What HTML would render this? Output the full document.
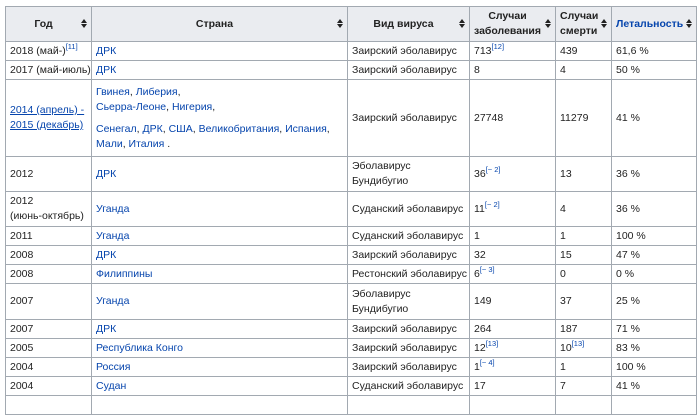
<!DOCTYPE html>
<html><head><meta charset="utf-8"><style>
body{margin:0;background:#fff;font-family:"Liberation Sans",Arial,sans-serif;font-size:10.5px;color:#222;}
table{position:absolute;left:5px;top:6px;border-collapse:collapse;table-layout:fixed;width:691px;}
td,th{border:1px solid #a2a9b1;padding:0 4px;vertical-align:middle;line-height:15px;white-space:nowrap;overflow:hidden;}
th{background:#eaecf0;font-weight:bold;text-align:center;position:relative;padding-right:14px;}
th:after{content:"";position:absolute;right:4px;top:12px;width:0;height:0;border-left:3px solid transparent;border-right:3px solid transparent;border-bottom:4px solid #222;}
th:before{content:"";position:absolute;right:4px;top:17px;width:0;height:0;border-left:3px solid transparent;border-right:3px solid transparent;border-top:4px solid #222;}
a{color:#0645ad;text-decoration:none}
sup{font-size:7.5px;line-height:0;color:#0645ad;vertical-align:5px}
.u{text-decoration:underline}
</style></head><body>
<table>
<colgroup><col style="width:86px"><col style="width:256px"><col style="width:122px"><col style="width:86px"><col style="width:56px"><col style="width:85px"></colgroup>
<tr style="height:35px"><th>Год</th><th>Страна</th><th>Вид вируса</th><th>Случаи<br>заболевания</th><th>Случаи<br>смерти</th><th><a>Летальность</a></th></tr>
<tr style="height:19px"><td>2018 (май-)<sup>[11]</sup></td><td><a>ДРК</a></td><td>Заирский эболавирус</td><td>713<sup>[12]</sup></td><td>439</td><td>61,6 %</td></tr>
<tr style="height:19px"><td>2017 (май-июль)</td><td><a>ДРК</a></td><td>Заирский эболавирус</td><td>8</td><td>4</td><td>50 %</td></tr>
<tr style="height:77px"><td><a class="u">2014 (апрель) -<br>2015 (декабрь)</a></td><td><a>Гвинея</a>, <a>Либерия</a>,<br><a>Сьерра-Леоне</a>, <a>Нигерия</a>,<div style="height:7px"></div><a>Сенегал</a>, <a>ДРК</a>, <a>США</a>, <a>Великобритания</a>, <a>Испания</a>,<br><a>Мали</a>, <a>Италия</a> .</td><td>Заирский эболавирус</td><td>27748</td><td>11279</td><td>41 %</td></tr>
<tr style="height:35px"><td>2012</td><td><a>ДРК</a></td><td>Эболавирус<br>Бундибугио</td><td>36<sup>[~ 2]</sup></td><td>13</td><td>36 %</td></tr>
<tr style="height:35px"><td>2012<br>(июнь-октябрь)</td><td><a>Уганда</a></td><td>Суданский эболавирус</td><td>11<sup>[~ 2]</sup></td><td>4</td><td>36 %</td></tr>
<tr style="height:19px"><td>2011</td><td><a>Уганда</a></td><td>Суданский эболавирус</td><td>1</td><td>1</td><td>100 %</td></tr>
<tr style="height:19px"><td>2008</td><td><a>ДРК</a></td><td>Заирский эболавирус</td><td>32</td><td>15</td><td>47 %</td></tr>
<tr style="height:19px"><td>2008</td><td><a>Филиппины</a></td><td>Рестонский эболавирус</td><td>6<sup>[~ 3]</sup></td><td>0</td><td>0 %</td></tr>
<tr style="height:36px"><td>2007</td><td><a>Уганда</a></td><td>Эболавирус<br>Бундибугио</td><td>149</td><td>37</td><td>25 %</td></tr>
<tr style="height:19px"><td>2007</td><td><a>ДРК</a></td><td>Заирский эболавирус</td><td>264</td><td>187</td><td>71 %</td></tr>
<tr style="height:19px"><td>2005</td><td><a>Республика Конго</a></td><td>Заирский эболавирус</td><td>12<sup>[13]</sup></td><td>10<sup>[13]</sup></td><td>83 %</td></tr>
<tr style="height:19px"><td>2004</td><td><a>Россия</a></td><td>Заирский эболавирус</td><td>1<sup>[~ 4]</sup></td><td>1</td><td>100 %</td></tr>
<tr style="height:19px"><td>2004</td><td><a>Судан</a></td><td>Суданский эболавирус</td><td>17</td><td>7</td><td>41 %</td></tr>
<tr style="height:19px"><td>&nbsp;</td><td></td><td></td><td></td><td></td><td></td></tr>
</table>
</body></html>
